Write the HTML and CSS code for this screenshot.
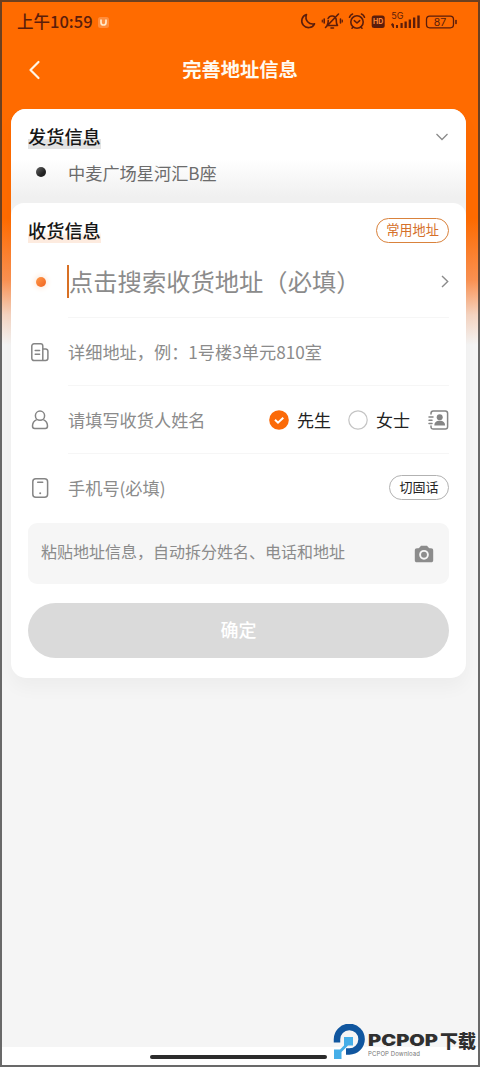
FILE: index.html
```
<!DOCTYPE html>
<html lang="zh-CN">
<head>
<meta charset="utf-8">
<title>完善地址信息</title>
<link rel="stylesheet" href="styles.css">
</head>
<body>
<div class="phone">
  <header class="status">
    <span class="time">上午10:59</span>
    <svg class="u-badge" width="11" height="11" viewBox="0 0 11 11"><rect width="11" height="11" rx="2.5" fill="#ff8d3c"/><path d="M3 2.500v3a2.500 2.500 0 0 0 5 0v-3" fill="none" stroke="#ffe9c9" stroke-width="1.700"/></svg>
    <svg class="status-icons" width="160" height="22" viewBox="0 0 160 22" fill="none" stroke="#5b1d0b" stroke-width="1.600" stroke-linecap="round" stroke-linejoin="round">
      <path d="M7.500 4.500a6.700 6.700 0 1 0 8 9.300C9.800 15 5.500 10 7.500 4.500Z"/>
      <path d="M28 15.500h10.500c-1.500-2-1.200-3.500-1.200-5.500a4.300 4.300 0 0 0-8.200-1.500M28 15.500c1.300-1.500 1.200-3 1.200-5M32 18h2.500M39.500 4 26.500 17.500M25.200 9v4M41.500 9v4" />
      <path d="M23.300 10v2M43.300 10v2" stroke-width="1.200"/>
      <circle cx="58" cy="12" r="6.200"/><path d="m55.300 10.700 2.700 2.300 2.700-2.300M50.500 7.200c.5-1.600 1.600-2.700 3-3.200M65.500 7.200c-.5-1.600-1.600-2.700-3-3.200M54 17.200l-1 1M62 17.200l1 1"/>
      <rect x="72.700" y="5.500" width="13" height="12.500" rx="2.500" fill="#5b1d0b" stroke="none"/>
      <g fill="#5b1d0b" stroke="none">
        <rect x="97" y="15" width="2" height="3"/><rect x="101.500" y="13" width="2.200" height="5"/><rect x="105.500" y="11.500" width="2.300" height="6.500"/><rect x="109.700" y="9.500" width="2.300" height="8.500"/><rect x="114" y="7.500" width="2.300" height="10.500"/><rect x="118.300" y="5.500" width="2.400" height="12.500"/>
        <path d="m92 14.500 1.500-1.500 1.500 1.500v3.500h-1z"/>
      </g>
      <rect x="127.500" y="6.200" width="27" height="11.600" rx="3.200" stroke-width="1.300"/><path d="M157 10.500v3" stroke-width="1.600"/>
      <g fill="#5b1d0b" stroke="none" class="status-text">
        <text x="92.300" y="9" font-size="9">5G</text>
        <text x="141" y="15.700" font-size="10.500" text-anchor="middle">87</text>
        <text x="79.200" y="14.300" font-size="7" font-weight="700" text-anchor="middle" fill="#ff8a3a">HD</text>
      </g>
    </svg>
  </header>

  <nav class="nav">
    <svg width="14" height="20" viewBox="0 0 14 20" fill="none" stroke="#fff5e6" stroke-width="2.200" stroke-linecap="round" stroke-linejoin="round"><path d="M11.500 2 3.500 10l8 8"/></svg>
    <h1 class="title">完善地址信息</h1>
  </nav>

  <main class="card">
    <section class="sender">
      <div class="sender-head">
        <h2 class="heading heading-gray">发货信息</h2>
        <svg width="14" height="8" viewBox="0 0 14 8" fill="none" stroke="#8b8b8b" stroke-width="1.300"><path d="m1.500 1 5.500 5.500L12.500 1"/></svg>
      </div>
      <div class="sender-addr"><i class="dot dot-dark"></i><span>中麦广场星河汇B座</span></div>
    </section>

    <section class="receiver">
      <div class="receiver-head">
        <h2 class="heading heading-orange">收货信息</h2>
        <span class="pill pill-orange">常用地址</span>
      </div>

      <div class="row row-search">
        <span class="icon"><i class="dot dot-orange"></i></span>
        <div class="field field-search">
          <i class="caret"></i><span class="placeholder-big">点击搜索收货地址（必填）</span>
          <svg class="go" width="8" height="13" viewBox="0 0 8 13" fill="none" stroke="#8b8b8b" stroke-width="1.400"><path d="m1 1 5.700 5.500L1 12"/></svg>
        </div>
      </div>

      <div class="row">
        <span class="icon"><svg width="20" height="20" viewBox="0 0 20 20" fill="none" stroke="#858585" stroke-width="1.500" stroke-linejoin="round" stroke-linecap="round"><path d="M12.800 18.500H4a2.200 2.200 0 0 1-2.200-2.200V4A2.200 2.200 0 0 1 4 1.800h6.600A2.200 2.200 0 0 1 12.800 4ZM12.800 7h2.900a2.200 2.200 0 0 1 2.200 2.200v7.100a2.200 2.200 0 0 1-2.200 2.200h-2.900M5.200 8.500h4.400M5.200 12.300h4.400"/></svg></span>
        <div class="field">详细地址，例：1号楼3单元810室</div>
      </div>

      <div class="row">
        <span class="icon"><svg width="20" height="20" viewBox="0 0 20 20" fill="none" stroke="#858585" stroke-width="1.500" stroke-linejoin="round"><circle cx="10" cy="5.700" r="4.600"/><path d="M6.700 9.600c-2.300 1-4.200 3.400-4.200 6.500 0 1.700.7 2.500 2.200 2.500h10.600c1.500 0 2.200-.8 2.200-2.500 0-3.100-1.900-5.500-4.200-6.500"/></svg></span>
        <div class="field">
          <span>请填写收货人姓名</span>
          <div class="choices">
            <svg width="20" height="20" viewBox="0 0 20 20"><circle cx="10" cy="10" r="9.800" fill="#fb6a08"/><path d="m6 9.800 3 2.900 5.300-5" fill="none" stroke="#fff" stroke-width="2"/></svg>
            <span class="choice">先生</span>
            <svg class="radio" width="20" height="20" viewBox="0 0 20 20"><circle cx="10" cy="10" r="9.200" fill="#fff" stroke="#c4c4c4" stroke-width="1.200"/></svg>
            <span class="choice">女士</span>
            <svg class="contacts" width="21" height="20" viewBox="0 0 21 20" fill="none" stroke="#858585" stroke-width="1.500" stroke-linecap="round"><path d="M3 4V3.300C3 1.800 3.800 1 5.300 1h12c1.500 0 2.300.8 2.300 2.300v13.400c0 1.500-.8 2.300-2.300 2.300h-12C3.800 19 3 18.200 3 16.700V16M1 7h4M1 10.300h3M1 13.600h3"/><circle cx="11.700" cy="7.300" r="3" fill="#858585" stroke="none"/><path d="M6.300 15.500c0-3 1.800-4.200 3.900-4.700h3c2.100.5 3.900 1.700 3.900 4.700Z" fill="#858585" stroke="none"/></svg>
          </div>
        </div>
      </div>

      <div class="row row-last">
        <span class="icon"><svg width="20" height="22" viewBox="0 0 20 22" fill="none" stroke="#858585" stroke-width="1.500" stroke-linecap="round"><rect x="2.800" y="1.700" width="14.800" height="18.600" rx="3"/><path d="M7.700 5.200h5"/><circle cx="10.200" cy="16.300" r="1" fill="#858585" stroke="none"/></svg></span>
        <div class="field"><span>手机号(必填)</span><span class="pill pill-gray">切固话</span></div>
      </div>

      <div class="paste">
        <span>粘贴地址信息，自动拆分姓名、电话和地址</span>
        <svg width="20" height="18" viewBox="0 0 20 18"><path d="M5.500 2.500 7 .8h6l1.500 1.700 1 .7H17c1.500 0 2.200.8 2.200 2.200v9.800c0 1.400-.7 2.100-2.200 2.100H3c-1.500 0-2.200-.7-2.200-2.100V5.400C.8 4 1.500 3.200 3 3.200h1.500z" fill="#8c8c8c"/><circle cx="10" cy="9.800" r="3.900" fill="none" stroke="#f5f5f5" stroke-width="1.900"/></svg>
      </div>

      <button class="submit">确定</button>
    </section>
  </main>

  <footer class="home"><i class="home-bar"></i></footer>
  <div class="watermark">
    <svg width="32" height="36" viewBox="0 0 32 36"><path d="M4 18.500V15.500A12.300 12.300 0 1 1 16 27.500h-3" fill="none" stroke="#10569f" stroke-width="6.500"/><path d="M11 13h9v8.500h-5L8.500 28v7H1v-9.500h6l4-4z" fill="#45aee8"/></svg>
    <div class="brand">
      <div class="brand-name"><svg width="73" height="18" viewBox="0 0 73 18"><text class="brand-latin" x="0" y="15.300" textLength="70" lengthAdjust="spacingAndGlyphs">PCPOP</text></svg><span>下载</span></div>
      <svg width="58" height="8" viewBox="0 0 58 8"><text class="brand-sub" x="0" y="5.500" textLength="52">PCPOP Download</text></svg>
    </div>
  </div>
</div>
</body>
</html>
```
FILE: styles.css
```
* { box-sizing: border-box; }
body {
  margin: 0;
  font-family: "Noto Sans CJK SC", sans-serif;
  color: #8b8b8b;
}
h1, h2 { margin: 0; }
svg { display: block; flex: none; }
.phone {
  position: relative;
  width: 480px;
  height: 1067px;
  overflow: hidden;
  display: flex;
  flex-direction: column;
  border: 2px solid rgba(45, 45, 45, .7);
  background: linear-gradient(#ff6b00 0, #ff6b00 218px, #fb9252 280px, #f6d5c2 315px, #f5f5f5 345px) border-box;
}
.status {
  height: 38px;
  padding: 0 19px 0 15px;
  display: flex;
  align-items: center;
  color: #5b1d0b;
}
.time {
  font-size: 16.500px;
  line-height: 24px;
  font-weight: 500;
  width: 81px;
  padding-bottom: 1px;
  white-space: nowrap;
}
.u-badge { margin-top: 3px; }
.status-icons { margin: 0 0 0 auto; }
.status-text { font-family: Inter, sans-serif; }
.nav {
  height: 67px;
  padding: 0 0 9px 25px;
  display: grid;
  grid-template-columns: 14px 1fr 39px;
  align-items: center;
}
.nav svg { margin-top: 2px; }
.title {
  text-align: center;
  font-size: 19.300px;
  line-height: 28px;
  font-weight: 700;
  color: #fffaf0;
}
.card {
  margin: 2px 12px 0 9px;
  height: 569px;
  border-radius: 15px;
  background: #f1f1f1;
  box-shadow: 0 10px 18px rgba(0, 0, 0, .035);
}
.sender {
  height: 94px;
  padding: 15px 17px 0;
  border-radius: 15px 15px 0 0;
  background: linear-gradient(#fff 50px, #f0f0f0 88px);
}
.sender-head, .receiver-head {
  display: flex;
  align-items: center;
  justify-content: space-between;
}
.heading {
  font-size: 18.200px;
  line-height: 25px;
  font-weight: 500;
  color: #161616;
}
.receiver-head .heading { line-height: 24px; padding-bottom: 1px; }
.heading-gray { background: linear-gradient(transparent 15px, #e2e2e2 15px); }
.heading-orange { background: linear-gradient(transparent 14px, #fdebdf 19px); }
.sender-addr {
  display: flex;
  align-items: center;
  height: 26px;
  margin-top: 10px;
  font-size: 17.200px;
  color: #6b6b6b;
}
.dot { width: 10px; height: 10px; border-radius: 50%; flex: none; }
.dot-dark {
  margin: 0 22px 0 8px;
  background: linear-gradient(135deg, #666, #222 65%);
}
.dot-orange {
  margin-left: 2px;
  background: linear-gradient(135deg, #ff9a4a, #f0621f);
  box-shadow: 0 0 5px 2px #fdeee2;
}
.receiver {
  height: 475px;
  padding: 15px 17px 0;
  border-radius: 13px 13px 15px 15px;
  background: #fff;
}
.pill {
  display: flex;
  align-items: center;
  justify-content: center;
  height: 25px;
  padding-bottom: 2px;
  border-radius: 13px;
  font-size: 13.200px;
  flex: none;
}
.pill-orange { width: 73px; border: 1.500px solid #d9823c; color: #d5702a; }
.pill-gray { width: 60px; border: 1px solid #b2b2b2; color: #222; font-size: 13px; }
.row {
  display: flex;
  align-items: center;
  height: 68px;
}
.icon { width: 24px; margin-right: 16px; display: flex; justify-content: center; flex: none; }
.field {
  flex: 1;
  height: 100%;
  display: flex;
  align-items: center;
  justify-content: space-between;
  border-bottom: 1px solid #f6f6f6;
  font-size: 17.200px;
  white-space: nowrap;
}
.row-search { height: 75px; padding-top: 3px; }
.field-search { justify-content: flex-start; }
.caret { width: 2px; height: 33px; margin-left: -1px; background: #d87024; flex: none; }
.placeholder-big { font-size: 24.300px; line-height: 34px; padding-bottom: 2px; }
.go { margin-left: auto; }
.choices { display: flex; align-items: center; }
.choice { font-size: 17px; color: #222; margin-left: 8px; }
.radio { margin-left: 17px; }
.contacts { margin-left: 18px; }
.row-last { height: 68px; }
.row-last .field { border: 0; padding-bottom: 2px; }
.paste {
  height: 61px;
  margin-top: 1px;
  padding: 0 15px 5px 13px;
  display: flex;
  align-items: center;
  justify-content: space-between;
  border-radius: 9px;
  background: #f6f6f6;
  font-size: 16px;
  white-space: nowrap;
}
.paste svg { margin-top: 5px; }
.submit {
  display: block;
  width: 100%;
  height: 55px;
  margin-top: 19px;
  padding: 0 0 3px;
  border: 0;
  border-radius: 28px;
  background: #dadada;
  color: #fff;
  font: 500 18px "Noto Sans CJK SC", sans-serif;
}
.home {
  height: 18px;
  margin-top: auto;
  padding: 2px 3px 0 0;
  display: flex;
  justify-content: center;
  align-items: center;
  background: #fff;
}
.home-bar { width: 177px; height: 4px; border-radius: 2px; background: #2b2b2b; }
.watermark {
  position: absolute;
  right: -1px;
  bottom: 5px;
  display: flex;
  align-items: center;
  width: 146px;
  gap: 3px;
  color: #303030;
}
.brand { padding-top: 3px; }
.brand-name {
  display: flex;
  align-items: center;
  height: 20px;
  font-size: 18px;
  font-weight: 900;
  line-height: 20px;
  white-space: nowrap;
}
.brand-name span { margin-left: -1px; }
.brand-latin { font: 900 16px Inter, sans-serif; fill: #303030; }
.brand-sub { font: 6px Inter, sans-serif; fill: #777; }
```
